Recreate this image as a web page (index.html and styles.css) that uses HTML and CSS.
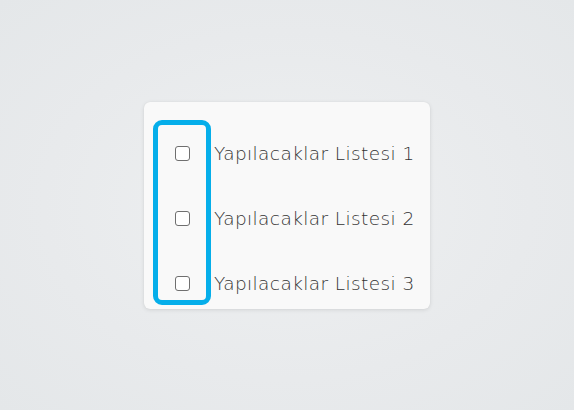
FILE: index.html
```html
<!DOCTYPE html>
<html lang="tr">
<head>
<meta charset="utf-8">
<title>Yapılacaklar</title>
<link rel="stylesheet" href="styles.css">
</head>
<body>
<main class="stage">
  <section class="card">
    <div class="list">
      <div class="highlight"></div>
      <span class="box r1"></span><span class="label r1">Yapılacaklar Listesi 1</span>
      <span class="box r2"></span><span class="label r2">Yapılacaklar Listesi 2</span>
      <span class="box r3"></span><span class="label r3">Yapılacaklar Listesi 3</span>
    </div>
  </section>
</main>
</body>
</html>
```
FILE: styles.css
```css
html, body {
  margin: 0;
  height: 100%;
}
body {
  background: radial-gradient(ellipse at 50% 50%, #eef0f1 0%, #e8eaec 60%, #e4e7e9 100%);
  font-family: "DejaVu Sans", "Open Sans", sans-serif;
}
.stage {
  height: 100%;
  display: flex;
  align-items: center;
  justify-content: center;
}
.card {
  width: 286px;
  box-sizing: border-box;
  background: #f9f9f9;
  border-radius: 6px;
  box-shadow: 0 1px 4px rgba(0, 0, 0, 0.10), 0 0 1px rgba(0, 0, 0, 0.08);
  padding: 32px 10px 5px 9px;
}
.list {
  display: grid;
  grid-template-columns: 58px auto;
  grid-template-rows: 40px 40px 40px;
  row-gap: 25px;
  column-gap: 3px;
  align-items: center;
}
.highlight {
  grid-column: 1;
  grid-row: 1 / 4;
  align-self: stretch;
  margin: -14px 0 -1px 0;
  border: 5px solid #05aeea;
  border-radius: 9px;
}
.box {
  grid-column: 1;
  justify-self: center;
  width: 13px;
  height: 13px;
  border: 1px solid #6f6f6f;
  border-radius: 3px;
  background: #fff;
}
.label {
  grid-column: 2;
  font-size: 18.5px;
  letter-spacing: 0.4px;
  font-weight: 200;
  color: #333;
  white-space: nowrap;
}
.r1 { grid-row: 1; }
.r2 { grid-row: 2; }
.r3 { grid-row: 3; }
```
